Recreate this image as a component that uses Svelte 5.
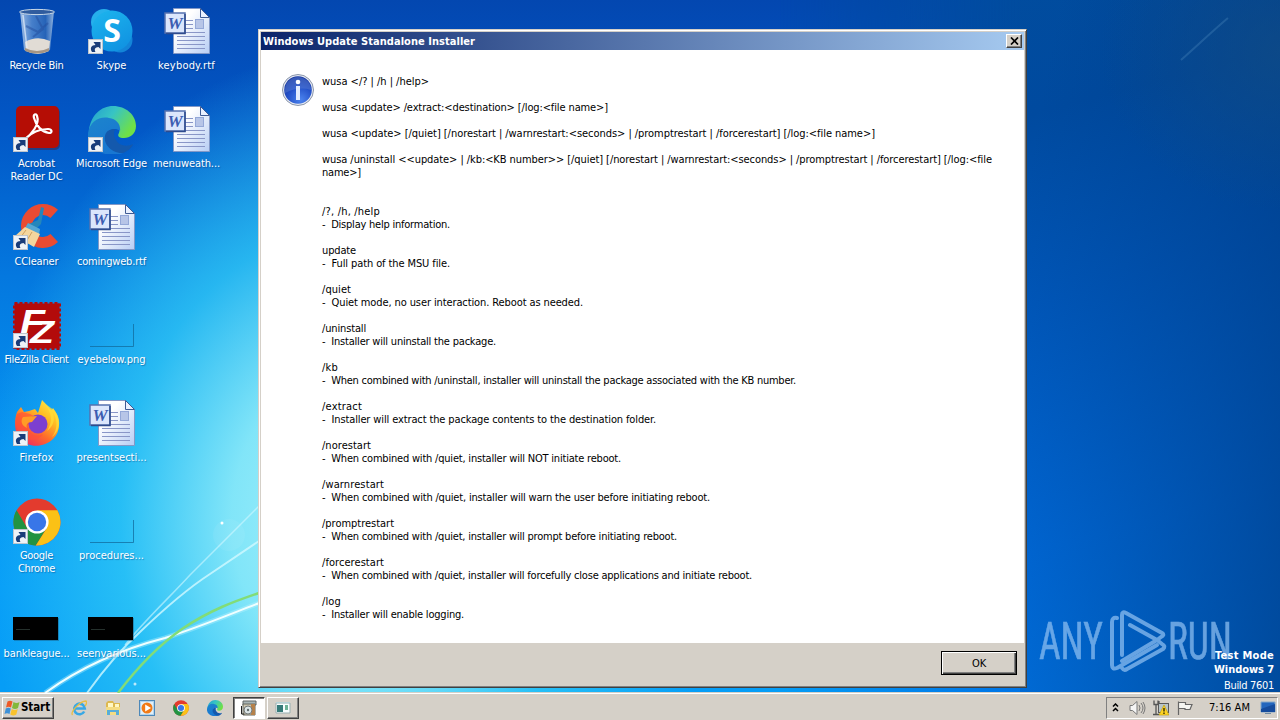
<script lang="ts">
  type Line = [string, number];
  type Item = { icon: string; label: Line[]; shortcut?: boolean };

  const items: Item[] = [
    { icon: "bin", label: [["Recycle Bin", 54]] },
    { icon: "acrobat", label: [["Acrobat", 37], ["Reader DC", 52]], shortcut: true },
    { icon: "ccleaner", label: [["CCleaner", 44]], shortcut: true },
    { icon: "filezilla", label: [["FileZilla Client", 64]], shortcut: true },
    { icon: "firefox", label: [["Firefox", 34]], shortcut: true },
    { icon: "chrome", label: [["Google", 33], ["Chrome", 37]], shortcut: true },
    { icon: "black", label: [["bankleague...", 66]] },
    { icon: "skype", label: [["Skype", 30]], shortcut: true },
    { icon: "edge", label: [["Microsoft Edge", 71]], shortcut: true },
    { icon: "word", label: [["comingweb.rtf", 69]] },
    { icon: "clear", label: [["eyebelow.png", 68]] },
    { icon: "word", label: [["presentsecti...", 70]] },
    { icon: "clear", label: [["procedures...", 65]] },
    { icon: "black", label: [["seenvarious...", 69]] },
    { icon: "word", label: [["keybody.rtf", 57]] },
    { icon: "word", label: [["menuweath...", 67]] },
  ];

  // text and advance width of each row of the message
  const lines: Line[] = [
    ["wusa </? | /h | /help>", 107],
    ["", 0],
    ["wusa <update> /extract:<destination> [/log:<file name>]", 286],
    ["", 0],
    ["wusa <update> [/quiet] [/norestart | /warnrestart:<seconds> | /promptrestart | /forcerestart] [/log:<file name>]", 553],
    ["", 0],
    ["wusa /uninstall <<update> | /kb:<KB number>> [/quiet] [/norestart | /warnrestart:<seconds> | /promptrestart | /forcerestart] [/log:<file", 670],
    ["name>]", 39],
    ["", 0],
    ["", 0],
    ["/?, /h, /help", 58],
    ["-  Display help information.", 128],
    ["", 0],
    ["update", 34],
    ["-  Full path of the MSU file.", 128],
    ["", 0],
    ["/quiet", 29],
    ["-  Quiet mode, no user interaction. Reboot as needed.", 261],
    ["", 0],
    ["/uninstall", 44],
    ["-  Installer will uninstall the package.", 174],
    ["", 0],
    ["/kb", 16],
    ["-  When combined with /uninstall, installer will uninstall the package associated with the KB number.", 474],
    ["", 0],
    ["/extract", 40],
    ["-  Installer will extract the package contents to the destination folder.", 334],
    ["", 0],
    ["/norestart", 49],
    ["-  When combined with /quiet, installer will NOT initiate reboot.", 299],
    ["", 0],
    ["/warnrestart", 62],
    ["-  When combined with /quiet, installer will warn the user before initiating reboot.", 388],
    ["", 0],
    ["/promptrestart", 72],
    ["-  When combined with /quiet, installer will prompt before initiating reboot.", 355],
    ["", 0],
    ["/forcerestart", 62],
    ["-  When combined with /quiet, installer will forcefully close applications and initiate reboot.", 430],
    ["", 0],
    ["/log", 19],
    ["-  Installer will enable logging.", 142],
  ];

  const quick = ["ie", "folder", "media", "chrome", "edge"];

  // tracks the letters so that the text fills the given width
  function fit(node: HTMLElement, width: number) {
    const count = node.textContent?.length ?? 0;
    if (!count || !width) return;
    const natural = node.getBoundingClientRect().width;
    node.style.letterSpacing = `${(width - natural) / count}px`;
  }
</script>

{#snippet chromeArt()}
  <circle cx="24" cy="24" r="23.5" fill="#e33b2e" />
  <path d="M3.6 12.2A23.5 23.5 0 0 0 22.8 47.5L34 29.5 24 24 13.8 29.5z" fill="#229342" />
  <path d="M44.4 12.3A23.5 23.5 0 0 1 22.8 47.5L34.2 29.5 24 12.3z" fill="#fbc116" />
  <circle cx="24" cy="24" r="11.6" fill="#fff" />
  <circle cx="24" cy="24" r="9.2" fill="#3876e8" />
{/snippet}

{#snippet edgeArt()}
  <path d="M1 24C3 9 13 0 25 0c13 0 23 9 23 20 0 8-6 12-12 12-5 0-7-2-5-5 2-5-2-10-9-10C12 17 4 22 1 31z" fill="url(#edgeTop)" />
  <path d="M0 27c2-11 11-17 21-15 8 1 12 7 11 13-4-4-14-2-14 6 0 9 9 14 17 16C17 53-2 43 0 27z" fill="url(#edgeLeft)" />
  <path d="M18 27c-5 10 6 21 17 20 5-2 9-5 10-9-6 3-14 2-17-4-3-5-2-8-1-11-4 0-7 1-9 4z" fill="#1459ad" />
{/snippet}

<svg class="defs" width="0" height="0">
  <defs>
    <linearGradient id="edgeTop" x1="0" y1="0" x2="1" y2="0.5">
      <stop offset="0" stop-color="#229bd2" />
      <stop offset="0.5" stop-color="#37c4c4" />
      <stop offset="1" stop-color="#6fe047" />
    </linearGradient>
    <linearGradient id="edgeLeft" x1="0" y1="0" x2="0.5" y2="1">
      <stop offset="0" stop-color="#1c84cc" />
      <stop offset="1" stop-color="#1877d2" />
    </linearGradient>
    <linearGradient id="page" x1="0" y1="0" x2="1" y2="1">
      <stop offset="0.3" stop-color="#fff" />
      <stop offset="1" stop-color="#b7cdf4" />
    </linearGradient>
    <linearGradient id="skype" x1="0" y1="0" x2="0.6" y2="1">
      <stop offset="0" stop-color="#1db6ee" />
      <stop offset="1" stop-color="#1194e2" />
    </linearGradient>
    <linearGradient id="fox" x1="0.9" y1="0" x2="0.2" y2="1">
      <stop offset="0" stop-color="#fff24a" />
      <stop offset="0.35" stop-color="#ffbb22" />
      <stop offset="0.65" stop-color="#ff6a2b" />
      <stop offset="1" stop-color="#ee2468" />
    </linearGradient>
    <linearGradient id="glass" x1="0" y1="0" x2="1" y2="0">
      <stop offset="0" stop-color="#d5e5f5" stop-opacity="0.75" />
      <stop offset="0.35" stop-color="#6a9bd6" stop-opacity="0.65" />
      <stop offset="0.75" stop-color="#356eb9" stop-opacity="0.7" />
      <stop offset="1" stop-color="#c2d8ee" stop-opacity="0.75" />
    </linearGradient>
    <radialGradient id="info" cx="0.6" cy="0.85" r="0.8">
      <stop offset="0" stop-color="#4b83ee" />
      <stop offset="0.6" stop-color="#2350c8" />
      <stop offset="1" stop-color="#1a3aa3" />
    </radialGradient>
  </defs>
</svg>

<main class="screen">
  <div class="desktop">
    <svg class="streaks" viewBox="0 0 1280 693" fill="none">
      <path d="M45 693C85 664 130 647 165 638 205 625 235 612 262 602" stroke="#baf3ff" stroke-width="5" opacity=".4" />
      <path d="M45 693C85 664 130 647 165 638 205 625 235 612 262 602" stroke="#f0ffff" stroke-width="2" />
      <path d="M87 693C105 668 120 650 140 632 165 608 190 587 210 574L262 539" stroke="#d2f9ff" stroke-width="2" opacity=".8" />
      <path d="M125 645C145 620 170 597 190 575L262 503" stroke="#d2f9ff" stroke-width="1.500" opacity=".6" />
      <path d="M118 693C140 664 162 643 182 629 210 610 235 601 262 592" stroke="#82dc77" stroke-width="2.500" />
      <circle cx="222" cy="523" r="1.500" fill="#fff" />
      <circle cx="229" cy="535" r="16" fill="#fff" opacity=".06" />
      <circle cx="135" cy="684" r="1.500" fill="#fff" opacity=".7" />
      <path d="M1181 60C1200 43 1216 28 1228 18" stroke="#5791c2" stroke-width="2" opacity=".3" />
    </svg>

    <div class="items">
      {#each items as item}
        <div class="item">
          <svg class="icon" viewBox="0 0 48 48">
            {#if item.icon === "bin"}
              <path d="M7 3h34l-4 39q-13 7-26 0z" fill="url(#glass)" />
              <path d="M12 34q12-7 25-1l-1 10q-11 6-23 0z" fill="#e1dcd5" />
              <path d="M12 40q12 6 24 0v3q-12 5-24 0z" fill="#a59584" />
              <path d="M13 18l12 6 10-9M23 8l7 13-10 8" fill="none" stroke="#244e9d" stroke-width="2" opacity=".5" />
              <ellipse cx="24" cy="4" rx="17.5" ry="2.6" fill="#305c9e" stroke="#c7d7e7" />
              <path d="M10 7l4 33" stroke="#e6f0fb" stroke-width="1.5" opacity=".7" />
            {:else if item.icon === "acrobat"}
              <rect x="4" y="2" width="43" height="42" rx="5" fill="#402040" opacity=".5" />
              <rect x="3" y="0" width="43" height="42" rx="5" fill="#b50d05" />
              <path d="M11 34C19 28 27 18 24 10c-1-3-4-2-3 2 2 8 8 14 15 15 4 0 3-4-1-4-10 0-18 5-23 10-2 2-1 4 2 1" fill="none" stroke="#fff" stroke-width="2.2" />
            {:else if item.icon === "ccleaner"}
              <circle cx="30" cy="22" r="16.500" fill="none" stroke="#e94b32" stroke-width="11" stroke-dasharray="76 28" transform="rotate(47 30 22)" />
              <path d="M28 3l3 1-3 16-5 5-7-5 9-4z" fill="#2486bb" />
              <path d="M15 19l12 6-1 6-14-7z" fill="#54a7d4" />
              <path d="M12 23l15 7-6 13-19-11z" fill="#f5d69d" />
              <path d="M13 26L7 34M19 28l-6 10" stroke="#cfa160" fill="none" />
            {:else if item.icon === "filezilla"}
              <rect x="1.5" y="1.5" width="45" height="45" fill="#b30b0b" stroke="#b30b0b" stroke-width="3" stroke-dasharray="3 2" />
              <text class="fz" x="7" y="32" font-size="35" textLength="25" lengthAdjust="spacingAndGlyphs">F</text>
              <text class="fz" x="17" y="41" font-size="31" textLength="24" lengthAdjust="spacingAndGlyphs">Z</text>
            {:else if item.icon === "firefox"}
              <path d="M4 12l4-5 3 5 5-1 6-2 3 4 4-13c4 4 6 7 8 9l2 1 1-2c8 10 8 24 0 31-9 9-25 9-33 0-6-7-6-19-3-27z" fill="url(#fox)" />
              <path d="M4 14l5-2 8 2 6 3-5 4-4 5c1 8 9 12 16 8-5 8-19 8-24-1-3-5-4-13-2-19z" fill="#ff5138" opacity=".65" />
              <circle cx="25" cy="24" r="9.5" fill="#7c3fd0" />
              <path d="M10 17l14-1-5 6c-5 0-6 3-5 6-5-2-7-7-4-11z" fill="#ff9c26" />
              <path d="M30 2c8 9 11 18 4 29 8-6 8-14 5-20 6 8 6 18 0 26 12-10 7-25-1-29z" fill="#ffdd38" opacity=".75" />
            {:else if item.icon === "chrome"}
              {@render chromeArt()}
            {:else if item.icon === "skype"}
              <circle cx="16" cy="14" r="13" fill="#26b0ec" />
              <circle cx="32" cy="32" r="12.500" fill="#1385d8" />
              <circle cx="24" cy="23" r="20.500" fill="url(#skype)" />
              <text class="skype" x="24" y="34">S</text>
            {:else if item.icon === "edge"}
              {@render edgeArt()}
            {:else if item.icon === "word"}
              <path d="M10.500.5h27l9 9v36h-36z" fill="url(#page)" stroke="#8298c7" />
              <path d="M37.500.5v9h9z" fill="#e9f0ff" stroke="#3f5b94" />
              <path d="M22 12.500h8M22 16.500h8M22 20.500h8M14 24.500h28M14 28.500h28M14 32.500h28M14 36.500h28M14 40.500h28" stroke="#8996c7" />
              <rect x="32.500" y="11.500" width="8" height="9" fill="#b7c5e7" stroke="#94a8d8" />
              <rect x="2" y="5" width="20" height="20" fill="#dbe6fc" stroke="#5672b0" stroke-width="1.500" />
              <path d="M22 6v19.500H3" fill="none" stroke="#304c8d" stroke-width="1.500" />
              <text class="w" x="12" y="21">W</text>
            {:else if item.icon === "black"}
              <rect x="1" y="22" width="45" height="23" fill="#175d86" opacity=".5" />
              <rect x="0" y="21" width="45" height="23" fill="#000" />
              <path d="M3 33.500h14" stroke="#25302c" />
            {:else}
              <path d="M2 44.500h43.500V22" fill="none" stroke="#116b9c" stroke-width="1" opacity=".75" />
            {/if}
            {#if item.shortcut}
              <rect x=".5" y="31.500" width="14" height="14" fill="#eef2f7" stroke="#bec5cd" />
              <path d="M4 44C1.500 40 3.500 37 7.500 37L5.500 34H12.500V41L10.500 39C7 39.500 6 41 7.500 44z" fill="#193c79" />
            {/if}
          </svg>
          <div class="label">
            {#each item.label as [text, width]}
              <div><span use:fit={width}>{text}</span></div>
            {/each}
          </div>
        </div>
      {/each}
    </div>

    <svg class="watermark" viewBox="0 0 194 64">
      <g fill="#8fc0f2" stroke="#8fc0f2" stroke-width=".6" opacity=".72">
        <text x="1" y="49" textLength="64" lengthAdjust="spacingAndGlyphs">ANY</text>
        <text x="130" y="49" textLength="64" lengthAdjust="spacingAndGlyphs">RUN</text>
      </g>
      <g fill="none" stroke="#8fc0f2" stroke-width="4" stroke-linejoin="round" stroke-linecap="round" opacity=".72">
        <path d="M79 8Q74 7 74 12v43q0 5 5 3L119 35" />
        <path d="M84 45V5q0-4 4-2l36 20q3 2-1 4l-4 3-27-15" />
        <path d="M84 58q2 3 5 1l36-20q3-3-1-5l-5-4L84 51" />
      </g>
    </svg>

    <div class="build">
      <b><span use:fit={59}>Test Mode</span></b>
      <b><span use:fit={60}>Windows 7</span></b>
      <div><span use:fit={50}>Build 7601</span></div>
    </div>
  </div>

  <section class="dialog">
    <header class="title">
      <b><span use:fit={212}>Windows Update Standalone Installer</span></b>
      <button class="close" aria-label="Close">
        <svg width="9" height="8" viewBox="0 0 9 8"><path d="M1 .5l7 7M8 .5l-7 7" stroke="#000" stroke-width="1.7" /></svg>
      </button>
    </header>
    <div class="message">
      <svg class="info" viewBox="0 0 32 32">
        <circle cx="16" cy="16" r="15.500" fill="#e5e9f1" stroke="#8b96ac" />
        <circle cx="16" cy="16" r="13.800" fill="url(#info)" />
        <path d="M3 16a13 13 0 0 1 26 0Q17 12 3 19z" fill="#6587d5" opacity=".4" />
        <circle cx="16" cy="8" r="2.300" fill="#fff" />
        <rect x="14" y="12" width="4" height="14" fill="#e3edff" />
      </svg>
      <div class="lines">
        {#each lines as [text, width]}
          <div class="line"><span use:fit={width}>{text}</span></div>
        {/each}
      </div>
    </div>
    <footer>
      <button class="ok"><span use:fit={14}>OK</span></button>
    </footer>
  </section>

  <nav class="taskbar">
    <button class="start">
      <svg width="16" height="16" viewBox="0 0 16 16">
        <path d="M3.500 1.500q2.500-1.500 5 0L7 7.500Q4.500 6 2 7.500z" fill="#ef5a26" />
        <path d="M9.500 2q3 2 6 0L14 8q-3 2-6 0z" fill="#83b83c" />
        <path d="M1.800 8.500q2.500-1.500 5 0L5.500 14q-2.500-1.500-5 0z" fill="#3d91d8" />
        <path d="M7.800 9q3 2 6 0l-1.500 5.500q-3 2-6 0z" fill="#fac32d" />
      </svg>
      <b><span use:fit={29}>Start</span></b>
    </button>
    <div class="quick">
      {#each quick as name}
        {#if name === "ie"}
          <svg viewBox="0 0 16 16">
            <path d="M13.200 11.500A5.300 5.300 0 1 1 13.800 8.500H4" fill="none" stroke="#38a8e5" stroke-width="2.600" />
            <path d="M1.500 15C-1 12 9 1 15 1c1.500 2-1 5-1 5" fill="none" stroke="#e9bd42" stroke-width="1.300" />
          </svg>
        {:else if name === "folder"}
          <svg viewBox="0 0 16 16">
            <path d="M1 3l2-2h5l1 2h6v12H1z" fill="#ddb84f" />
            <path d="M3 3h5v6H3zM10 4h4v5h-4z" fill="#fff7c5" />
            <path d="M1 7h14v8H1z" fill="#f4dc83" />
            <path d="M2 15v-5h12v5h-3v-3H5v3z" fill="#58add9" />
          </svg>
        {:else if name === "media"}
          <svg viewBox="0 0 16 16">
            <rect x=".5" y=".5" width="15" height="15" fill="#b2d4ee" stroke="#4d88b9" />
            <rect x="2" y="2" width="12" height="12" fill="#e1f0f9" />
            <circle cx="8" cy="8" r="5.500" fill="#f17a16" />
            <path d="M6.200 4.500v7L12 8z" fill="#fff" />
          </svg>
        {:else if name === "chrome"}
          <svg viewBox="0 0 48 48">{@render chromeArt()}</svg>
        {:else}
          <svg viewBox="0 0 48 48">{@render edgeArt()}</svg>
        {/if}
      {/each}
    </div>
    <div class="tasks">
      <button class="task active" aria-label="Windows Update Standalone Installer">
        <svg viewBox="0 0 16 16">
          <path d="M2 1h13v4H2z" fill="#a9b6b7" stroke="#606766" />
          <path d="M2 4h12v11H2z" fill="#ccc5af" stroke="#62665e" />
          <path d="M10 4h4v11h-4z" fill="#b5814a" />
          <circle cx="7" cy="10" r="4" fill="#dbe5e6" stroke="#73797b" />
          <circle cx="7" cy="10" r="1.200" fill="#626d70" />
          <path d="M.5 6v8h3" fill="none" stroke="#222" />
        </svg>
      </button>
      <button class="task" aria-label="Application">
        <svg viewBox="0 0 16 16">
          <path d="M1 3h14v10H1z" fill="#f8ffff" stroke="#9aafb1" />
          <path d="M2 5h6v7H2z" fill="#367b79" />
          <path d="M10 5h3v5h-3z" fill="#6eb397" />
          <path d="M1 2.500h14" stroke="#b6d3d6" />
        </svg>
      </button>
    </div>
    <div class="tray">
      <svg class="chevron" width="7" height="9" viewBox="0 0 7 9"><path d="M1 3.500L3.500 1 6 3.500M1 8l2.500-2.500L6 8" fill="none" stroke="#000" stroke-width="1.500" /></svg>
      <svg class="speaker" width="17" height="16" viewBox="0 0 17 16">
        <path d="M1 5.500h2.500L8 1.500v13l-4.500-4H1z" fill="#f5f5f5" stroke="#787878" />
        <path d="M10 5q2 3 0 6M12 3q4 5 0 10M14 2q4 6 0 12" fill="none" stroke="#777" />
      </svg>
      <svg class="network" width="16" height="16" viewBox="0 0 16 16">
        <rect x="5.500" y="3.500" width="10" height="9" fill="#b9c5c9" stroke="#595959" />
        <path d="M1 .5v4h4v-4M3 5v10M0 14.500h6M6 1v3" fill="none" stroke="#555" stroke-width="1.300" />
        <path d="M11 5l5 10H6z" fill="#ffd424" stroke="#b99700" stroke-width=".6" />
        <path d="M11 8v3.500M11 12.500V14" stroke="#221d00" stroke-width="1.300" />
      </svg>
      <svg class="flag" width="16" height="16" viewBox="0 0 16 16"><path d="M1.500 15V1.500M2 2.500h6.500v2H15l-2 5H8v-1H2" fill="#f5f5f1" stroke="#666" stroke-width="1.200" /></svg>
      <span class="clock"><span use:fit={41}>7:16 AM</span></span>
      <svg class="monitor" width="16" height="16" viewBox="0 0 16 16">
        <path d="M1 2h14v10H1z" fill="#2366bd" stroke="#85a8c9" />
        <path d="M1 9l14-5v8H1z" fill="#154b9c" />
        <path d="M5 13h6v1H5z" fill="#718ba2" />
      </svg>
    </div>
  </nav>
</main>

<style>
  :global(body) {
    margin: 0;
    overflow: hidden;
  }

  .screen {
    position: relative;
    display: flex;
    flex-direction: column;
    width: 1280px;
    height: 720px;
    overflow: hidden;
    font-family: "DejaVu Sans Condensed", "DejaVu Sans", sans-serif;
    font-stretch: condensed;
    font-size: 11px;
    line-height: 13px;
    color: #000;
  }

  .screen span {
    display: inline-block;
    white-space: pre;
  }

  .defs {
    position: absolute;
  }

  .desktop {
    position: relative;
    height: 692px;
    background:
      radial-gradient(ellipse 370px 470px at 350px 520px, #a8f2fb 0%, rgba(140, 236, 249, 0.92) 32%, rgba(50, 203, 246, 0.75) 62%, rgba(0, 160, 243, 0) 100%),
      linear-gradient(180deg, #0347b0 0%, #0257c6 18%, #0478df 40%, #0594f2 65%, #069cf7 85%, #069df6 100%);
  }

  .desktop::before {
    content: "";
    display: block;
    height: 692px;
    margin-left: 780px;
    background: linear-gradient(165deg, #014d9e 0%, #004a9f 22%, #0057ba 45%, #006bdc 75%, #0079ec 100%);
    -webkit-mask-image: linear-gradient(90deg, transparent, #000 240px);
    mask-image: linear-gradient(90deg, transparent, #000 240px);
  }

  .desktop::after {
    content: "";
    position: absolute;
    inset: 0 0 0 1020px;
    background:
      radial-gradient(ellipse 180px 160px at 100% 50px, rgba(20, 78, 132, 0.6), rgba(20, 78, 132, 0)),
      linear-gradient(100deg, rgba(0, 58, 128, 0) 10%, rgba(0, 55, 124, 0.7) 100%);
  }

  .streaks {
    position: absolute;
    z-index: 1;
    inset: 0;
    width: 1280px;
    height: 693px;
  }

  .items {
    position: absolute;
    z-index: 2;
    top: 8px;
    left: -1px;
    display: grid;
    grid-template-rows: repeat(7, 98px);
    grid-auto-columns: 75px;
    grid-auto-flow: column;
  }

  .icon {
    display: block;
    width: 48px;
    height: 48px;
    margin-left: 14px;
  }

  .label {
    margin-top: 3px;
    color: #fff;
    text-align: center;
    text-shadow: 1px 1px 1px rgba(0, 40, 100, 0.4);
  }

  .label div {
    display: flex;
    justify-content: center;
  }

  .fz {
    fill: #fff;
    font-family: "Liberation Sans", sans-serif;
    font-style: italic;
    font-weight: bold;
  }

  .skype {
    fill: #fff;
    font: bold 32px "Open Sans", sans-serif;
    text-anchor: middle;
  }

  .w {
    fill: #3d5db1;
    font: italic bold 17px "Liberation Serif", serif;
    text-anchor: middle;
  }

  .watermark {
    position: absolute;
    z-index: 1;
    top: 610px;
    left: 1038px;
    width: 194px;
    height: 64px;
    overflow: visible;
    font-family: Roboto, sans-serif;
    font-size: 51px;
    font-weight: 400;
  }

  .build {
    position: absolute;
    z-index: 2;
    right: 6px;
    top: 649px;
    display: flex;
    flex-direction: column;
    align-items: flex-end;
    color: #fff;
    line-height: 14px;
  }

  .build div {
    margin-top: 2px;
  }

  .dialog {
    position: absolute;
    z-index: 3;
    top: 29px;
    left: 258px;
    box-sizing: border-box;
    width: 769px;
    height: 659px;
    display: flex;
    flex-direction: column;
    padding: 1px;
    background: #d5d0c8;
    border: 1px solid;
    border-color: #d5d0c8 #404040 #404040 #d5d0c8;
    box-shadow: inset 1px 1px #fff, inset -1px -1px #808080;
  }

  .title {
    display: flex;
    align-items: center;
    justify-content: space-between;
    height: 18px;
    margin: 1px 1px 0;
    padding: 0 2px;
    color: #fff;
    font-size: 11px;
    background: linear-gradient(90deg, #0a246a, #a6caf0);
  }

  button {
    box-sizing: border-box;
    padding: 0;
    font: inherit;
    line-height: 13px;
    color: #000;
    background: #d5d0c8;
    border: 1px solid;
    border-color: #fff #404040 #404040 #fff;
    box-shadow: inset -1px -1px #808080;
  }

  .close {
    display: flex;
    align-items: center;
    justify-content: center;
    width: 16px;
    height: 14px;
  }

  .message {
    display: flex;
    flex: 1;
    margin: 0 1px;
    padding: 24px 0 0 21px;
    background: #fff;
  }

  .info {
    width: 32px;
    height: 32px;
  }

  .lines {
    margin: 1px 0 0 8px;
  }

  .line {
    height: 13px;
  }

  footer {
    display: flex;
    align-items: center;
    justify-content: flex-end;
    height: 43px;
    padding-right: 8px;
  }

  .ok {
    width: 76px;
    height: 24px;
    margin-bottom: 3px;
    border-color: #000;
    box-shadow: inset 1px 1px #fff, inset -1px -1px #404040, inset -2px -2px #808080;
  }

  .taskbar {
    position: relative;
    display: flex;
    align-items: center;
    box-sizing: border-box;
    height: 28px;
    padding: 2px 2px 0;
    background: #d5d0c8;
    border-top: 1px solid #d5d0c8;
    box-shadow: inset 0 1px #fff;
  }

  .start {
    display: flex;
    align-items: center;
    gap: 1px;
    width: 52px;
    height: 22px;
    padding-left: 1px;
    font-size: 11.5px;
  }

  .quick {
    display: flex;
    gap: 18px;
    margin-left: 17px;
  }

  .quick svg,
  .task svg {
    width: 16px;
    height: 16px;
  }

  .tasks {
    display: flex;
    gap: 2px;
    margin-left: 10px;
  }

  .task {
    display: flex;
    align-items: center;
    justify-content: center;
    width: 32px;
    height: 22px;
  }

  .task.active {
    background: #fff;
    border-color: #404040 #fff #fff #404040;
    box-shadow: inset 1px 1px #808080;
  }

  .tray {
    display: flex;
    align-items: center;
    box-sizing: border-box;
    width: 172px;
    height: 22px;
    margin-left: auto;
    padding: 0 1px 0 5px;
    border: 1px solid;
    border-color: #808080 #fff #fff #808080;
  }

  .speaker {
    margin-left: 10px;
  }

  .network {
    margin-left: 7px;
  }

  .flag {
    margin-left: 8px;
  }

  .clock {
    margin-left: 16px;
  }

  .monitor {
    margin-left: auto;
  }
</style>
